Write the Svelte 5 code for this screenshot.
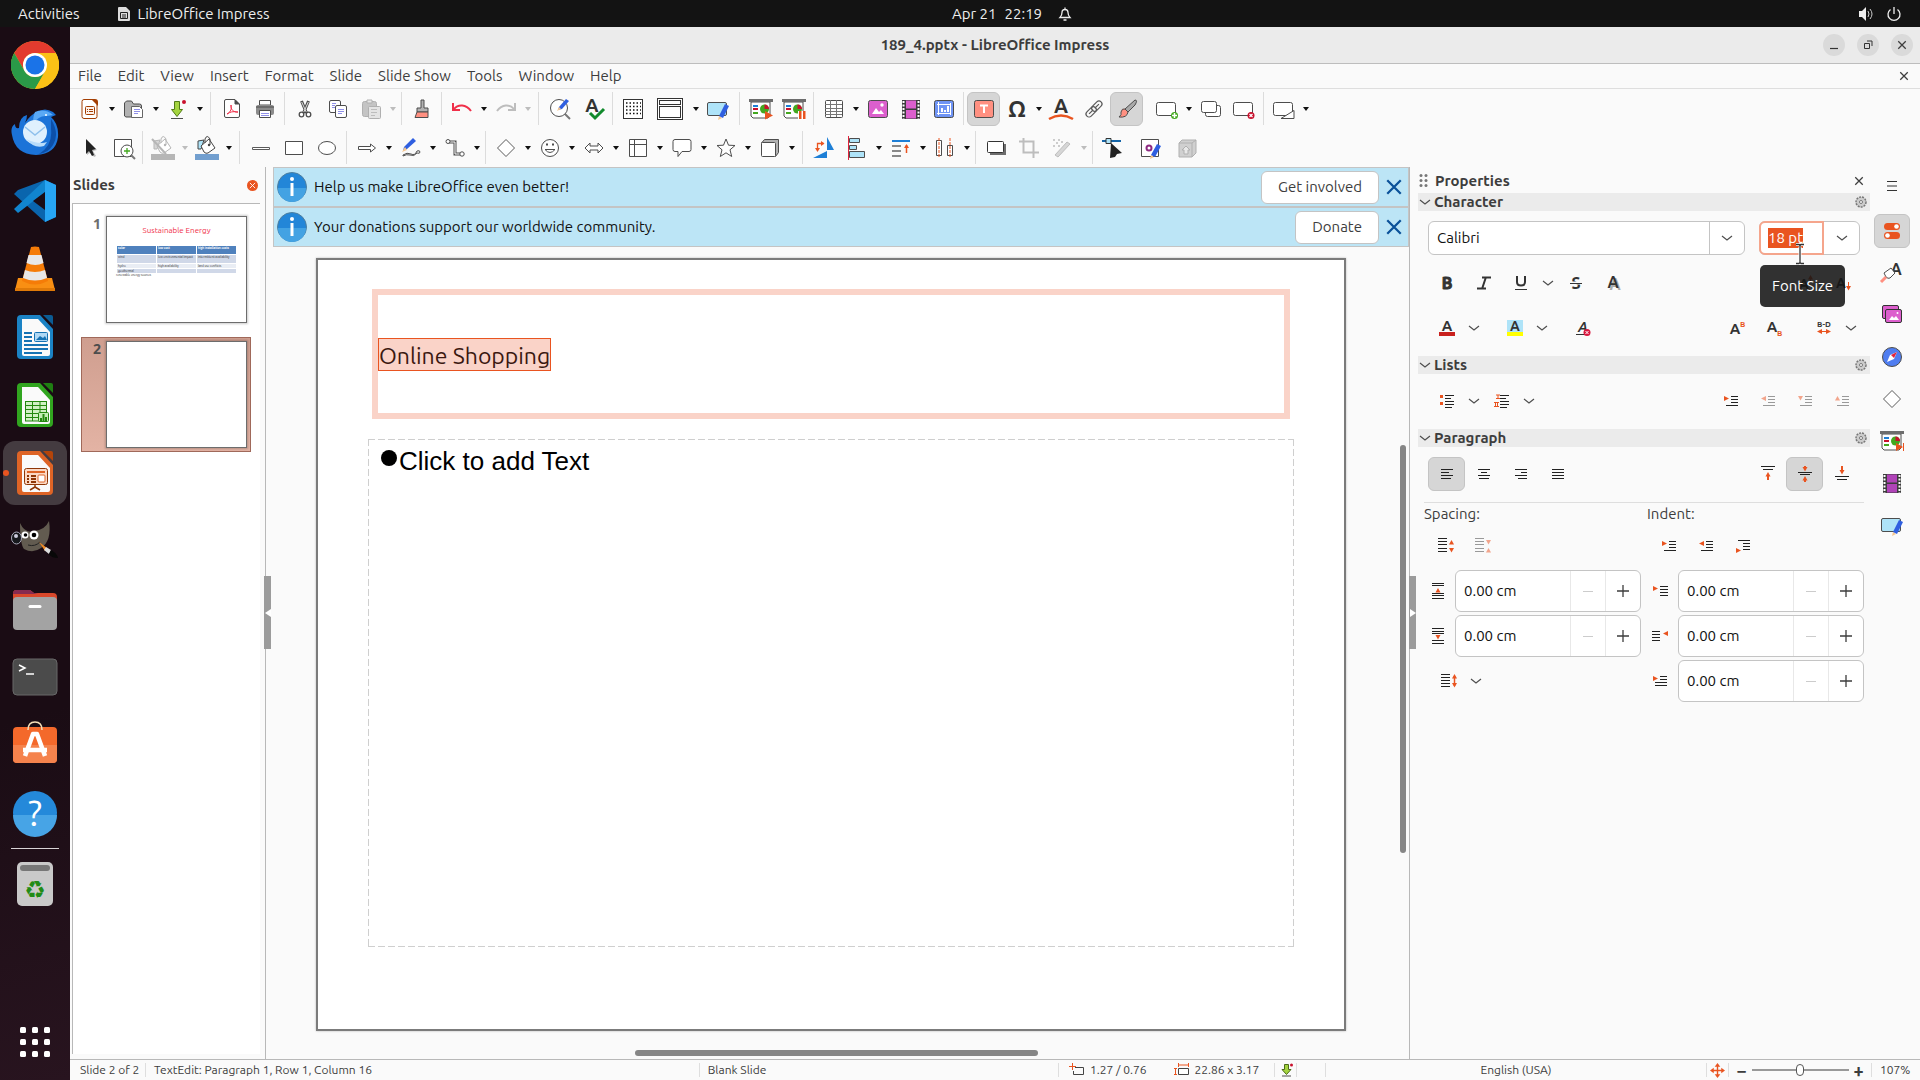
<script lang="ts">
	import { onMount } from 'svelte';

	type Tool = { icon: string; label: string; drop?: boolean; wide?: boolean; on?: boolean; off?: boolean };
	type Item = Tool | '|' | '||' | ' ';

	const menus = ['File', 'Edit', 'View', 'Insert', 'Format', 'Slide', 'Slide Show', 'Tools', 'Window', 'Help'];

	// '|' narrow separator, '||' wide separator, ' ' gap without a line
	const standardBar: Item[] = [
		{ icon: 'impress', label: 'New', drop: true },
		{ icon: 'open', label: 'Open', drop: true },
		{ icon: 'save', label: 'Save', drop: true },
		'||',
		{ icon: 'pdf', label: 'Export as PDF' },
		{ icon: 'print', label: 'Print' },
		'|',
		{ icon: 'cut', label: 'Cut' },
		{ icon: 'copy', label: 'Copy' },
		{ icon: 'paste', label: 'Paste', drop: true, off: true },
		'|',
		{ icon: 'clone', label: 'Clone Formatting' },
		'|',
		{ icon: 'undo', label: 'Undo', drop: true },
		{ icon: 'redo', label: 'Redo', drop: true, off: true },
		'||',
		{ icon: 'find', label: 'Find & Replace' },
		{ icon: 'spell', label: 'Spelling' },
		'|',
		{ icon: 'grid', label: 'Display Grid' },
		{ icon: 'views', label: 'Display Views', drop: true, wide: true },
		{ icon: 'note', label: 'Master Slide' },
		'||',
		{ icon: 'showFirst', label: 'Start from First Slide' },
		{ icon: 'showCurrent', label: 'Start from Current Slide' },
		'|',
		{ icon: 'table', label: 'Table', drop: true },
		{ icon: 'image', label: 'Image' },
		{ icon: 'video', label: 'Media' },
		{ icon: 'chart', label: 'Chart' },
		'|',
		{ icon: 'textbox', label: 'Text Box', on: true },
		{ icon: 'omega', label: 'Special Character', drop: true },
		{ icon: 'fontwork', label: 'Fontwork' },
		{ icon: 'link', label: 'Hyperlink' },
		{ icon: 'brush', label: 'Show Draw Functions', on: true },
		' ',
		{ icon: 'newSlide', label: 'New Slide', drop: true },
		{ icon: 'dupSlide', label: 'Duplicate Slide' },
		{ icon: 'delSlide', label: 'Delete Slide' },
		'|',
		{ icon: 'layout', label: 'Slide Layout', drop: true }
	];

	const drawingBar: Item[] = [
		{ icon: 'pointer', label: 'Select' },
		{ icon: 'zoom', label: 'Zoom & Pan' },
		'|',
		{ icon: 'lineColor', label: 'Line Color', drop: true, off: true },
		{ icon: 'fillColor', label: 'Fill Color', drop: true },
		'||',
		{ icon: 'line', label: 'Line' },
		{ icon: 'rect', label: 'Rectangle' },
		{ icon: 'ellipse', label: 'Ellipse' },
		'|',
		{ icon: 'arrowShape', label: 'Lines and Arrows', drop: true },
		{ icon: 'curve', label: 'Curves and Polygons', drop: true },
		{ icon: 'connector', label: 'Connectors', drop: true },
		'|',
		{ icon: 'diamond', label: 'Basic Shapes', drop: true },
		{ icon: 'smiley', label: 'Symbol Shapes', drop: true },
		{ icon: 'blockArrow', label: 'Block Arrows', drop: true },
		{ icon: 'flowchart', label: 'Flowchart', drop: true },
		{ icon: 'callout', label: 'Callouts', drop: true },
		{ icon: 'star', label: 'Stars and Banners', drop: true },
		{ icon: 'cube', label: '3D Objects', drop: true },
		'||',
		{ icon: 'rotate', label: 'Rotate' },
		{ icon: 'align', label: 'Align Objects', drop: true },
		{ icon: 'arrange', label: 'Arrange', drop: true },
		{ icon: 'distribute', label: 'Distribute', drop: true },
		'|',
		{ icon: 'shadow', label: 'Shadow' },
		{ icon: 'crop', label: 'Crop Image', off: true },
		{ icon: 'filter', label: 'Filter', drop: true, off: true },
		'|',
		{ icon: 'points', label: 'Points' },
		{ icon: 'glue', label: 'Gluepoints', wide: true },
		{ icon: 'extrude', label: 'Toggle Extrusion', off: true }
	];

	const dockApps = [
		{ icon: 'chrome', label: 'Google Chrome' },
		{ icon: 'thunderbird', label: 'Thunderbird Mail' },
		{ icon: 'vscode', label: 'Visual Studio Code' },
		{ icon: 'vlc', label: 'VLC media player' },
		{ icon: 'writer', label: 'LibreOffice Writer' },
		{ icon: 'calc', label: 'LibreOffice Calc' },
		{ icon: 'impressApp', label: 'LibreOffice Impress', active: true },
		{ icon: 'gimp', label: 'GIMP' },
		{ icon: 'files', label: 'Files' },
		{ icon: 'terminal', label: 'Terminal' },
		{ icon: 'software', label: 'Ubuntu Software' },
		{ icon: 'help', label: 'Help' }
	];

	const deckTabs = [
		{ icon: 'menu', label: 'Sidebar Settings' },
		{ icon: 'props', label: 'Properties', on: true },
		{ icon: 'styles', label: 'Styles' },
		{ icon: 'gallery', label: 'Gallery' },
		{ icon: 'navigator', label: 'Navigator' },
		{ icon: 'diamond', label: 'Shapes' },
		{ icon: 'transition', label: 'Slide Transition' },
		{ icon: 'film', label: 'Animation' },
		{ icon: 'note', label: 'Master Slides' }
	];

	const infobars = [
		{ text: 'Help us make LibreOffice even better!', action: 'Get involved' },
		{ text: 'Your donations support our worldwide community.', action: 'Donate' }
	];

	const thumbRows = [
		['wind', 'low environmental impact', 'intermittent availability'],
		['hydro', 'high availability', 'land use conflicts'],
		['geothermal', '', '']
	];

	let fontName = $state('Calibri');
	let fontSize = $state('18 pt');
	let zoom = $state(50);
	let sizeInput: HTMLInputElement;

	onMount(() => {
		sizeInput.focus();
		sizeInput.select();
	});

	const slideBase = (x: number, y: number) =>
		`<rect x="${x}" y="${y}" width="19" height="13" rx="2" fill="#fff" stroke="#4d4d4d"/>`;
	const screen = `<path d="M2 5v14l2 2h15l2-2V5z" fill="#fff" stroke="#4d4d4d"/><path d="M0 2h24v3H0z" fill="#6d6d6d"/><path d="M4 8h5v2H4z" fill="#1e7fd6"/><path d="M4 11h5v2H4z" fill="#c9112d"/><path d="M4 15h5v2H4z" fill="#43a81f"/><circle cx="15.500" cy="12" r="4.500" fill="#43a81f"/><path d="M15.500 12V7.500a4.500 4.500 0 0 1 4.500 4.500z" fill="#c9112d"/>`;
	const pencil = `<path d="M12 23l1-4 3 2z" fill="#f7c78f"/><path d="M13 19l6-11 4 2-6 11z" fill="#2f5fe0"/>`;
	const para = (y: number[], x1: number, x2: number, c = '#222') =>
		y.map((v) => `<path d="M${x1} ${v}.500H${x2}" stroke="${c}" fill="none"/>`).join('');
	const tri = { r: 'M0 0l5 2.500-5 2.500z', l: 'M5 0v5L0 2.500z', d: 'M0 0h5L2.500 4.500z', u: 'M0 4.500h5L2.500 0z' };
	const mark = (k: keyof typeof tri, x: number, y: number, c = '#e95420') =>
		`<path transform="translate(${x} ${y})" d="${tri[k]}" fill="${c}"/>`;
	const letter = (t: string, x: number, y: number, size: number, extra = '') =>
		`<text x="${x}" y="${y}" font-size="${size}" font-weight="700" fill="#333" text-anchor="middle" ${extra}>${t}</text>`;
	const film = (c: string, w = 18) =>
		`<path d="M${12 - w / 2} 3h${w}v19h-${w}z" fill="#3d3d3d"/><path d="M${16 - w / 2} 3.500h${w - 8}v8h-${w - 8}zM${16 - w / 2} 13h${w - 8}v8.500h-${w - 8}z" fill="${c}"/><path d="M${13.5 - w / 2} 4v18M${10.5 + w / 2} 4v18" stroke="#fff" stroke-width="2" stroke-dasharray="2 1.500"/>`;
	const bucket = (c: string, bg: string, bar: string) =>
		`<path d="M3 13V5l6-1-3 9z" fill="${bg}" stroke="${c}"/><path d="M6 10l8-7 6 9-7 5q-2 1-4-1z" fill="#fff" stroke="${c}"/><path d="M10 7V3q2-5 5 0v6" fill="none" stroke="${c}"/><circle cx="14" cy="9" r="1.200" fill="${c}"/><path d="M0 18h24v6H0z" fill="${bar}"/>`;

	const icons: Record<string, string> = {
		impress: `<path d="M6 2.500h9l4 4v13q0 2-2 2H6q-2 0-2-2v-15q0-2 2-2z" fill="#fff" stroke="#a33e03"/><path d="M13 2h4q3 0 3 3v4z" fill="#a33e03"/><rect x="7.500" y="9.500" width="9" height="8" rx="1" fill="#fdf1ea" stroke="#a33e03"/><path d="M9 12.500h1m1 0h4m-6 2h1m1 0h4" stroke="#a33e03"/>`,
		open: `<path d="M2.500 19V6l2-2h5l2 3h6q2 0 2 2v10q0 1-2 1H4z" fill="#b2b2b2" stroke="#4d4d4d"/><path d="M9.500 9.500h8l3 3v8h-11z" fill="#fff" stroke="#666"/><path d="M12 12.500h6m-6 2h6m-6 2h4" stroke="#8f8fe8"/>`,
		save: `<path d="M8.500 4.500h5v8h3l-5.500 7-5.500-7h3z" fill="#a4d43f" stroke="#517b16"/><path d="M5 21.500h12" stroke="#4d4d4d"/><circle cx="18" cy="5" r="2" fill="#c9112d"/>`,
		pdf: `<path d="M4.500 4q0-1.500 1.500-1.500h9l4.500 4.500v12q0 1.500-1.500 1.500H6q-1.500 0-1.500-1.500z" fill="#fff" stroke="#4d4d4d"/><path d="M15 3v4h4z" fill="#4d4d4d" stroke="#4d4d4d"/><path d="M7 17c4-2 5-6 4-9-1 4 3 8 7 7-5-1-8 0-11 2" fill="none" stroke="#f0304a"/>`,
		print: `<path d="M6.500 3.500h11V8h-11z" fill="#fff" stroke="#4d4d4d"/><rect x="3" y="8" width="18" height="10" rx="2" fill="#8c8c8c"/><path d="M3 10h18" stroke="#4d4d4d"/><path d="M6.500 13.500h11v7h-11z" fill="#fff" stroke="#4d4d4d"/><path d="M8 16.500h8m-8 2h8" stroke="#8f8fe8"/>`,
		cut: `<path d="M8.500 4l5 12M15.500 4l-5 12" stroke="#4d4d4d" stroke-width="3"/><path d="M8.700 5l4.500 10M15.300 5l-4.500 10" stroke="#ddd"/><circle cx="8.500" cy="17.500" r="2.300" fill="#fff" stroke="#4d4d4d" stroke-width="1.300"/><circle cx="15.500" cy="17.500" r="2.300" fill="#fff" stroke="#4d4d4d" stroke-width="1.300"/>`,
		copy: `<rect x="3.500" y="3.500" width="11" height="12" rx="1.500" fill="#fff" stroke="#4d4d4d"/><path d="M6 6.500h4m-4 2h3m-3 2h3" stroke="#8f8fe8"/><rect x="9.500" y="8.500" width="11" height="12" rx="1.500" fill="#fff" stroke="#4d4d4d"/><path d="M12 12.500h6m-6 2h6m-6 2h4" stroke="#8f8fe8"/>`,
		paste: `<rect x="3.500" y="4.500" width="14" height="15" rx="2" fill="#c4c4c4" stroke="#b0b0b0"/><path d="M8 3h5v3H8z" fill="#e8e8e8" stroke="#b0b0b0"/><rect x="9.500" y="9.500" width="12" height="12" rx="1" fill="#e4e4e4" stroke="#b0b0b0"/><path d="M12 12.500h6m-6 3h6m-6 3h4" stroke="#bdbdbd"/>`,
		clone: `<path d="M11 3h3v8h4v4H7v-4h4z" fill="#b2b2b2" stroke="#4d4d4d"/><path d="M7 15h11v5.500H5z" fill="#ff9081" stroke="#4d4d4d"/>`,
		undo: `<path d="M4 12c4-5 12-5 17 2" fill="none" stroke="#f0304a" stroke-width="2"/><path d="M3 6v7h7" fill="none" stroke="#f0304a" stroke-width="2"/>`,
		redo: `<path d="M20 12c-4-5-12-5-17 2" fill="none" stroke="#bdbdbd" stroke-width="2"/><path d="M21 6v7h-7" fill="none" stroke="#bdbdbd" stroke-width="2"/>`,
		find: `<circle cx="11" cy="11" r="8.500" fill="#fff" stroke="#4d4d4d"/><path d="M17 17l5 5" stroke="#777" stroke-width="2"/><path d="M10 13l1-3 7-8 3 2-7 8z" fill="#2f5fe0"/><path d="M9 14l2-4 2 2z" fill="#f7c78f"/>`,
		spell: `${letter('A', 11, 15, 19)}<path d="M9 16l5 5 9-9" fill="none" stroke="#118a2c" stroke-width="3"/>`,
		grid: `<rect x="2.500" y="2.500" width="19" height="19" fill="#fff" stroke="#333"/><path d="M5 6h15M5 9.500h15M5 13h15M5 16.500h15" stroke="#111" stroke-width="1.500" stroke-dasharray="1.500 2"/>`,
		views: `<rect x="-0.500" y="1.500" width="25" height="21" fill="#fff" stroke="#333"/><rect x="1.500" y="3.500" width="21" height="4" fill="none" stroke="#333"/><rect x="1.500" y="9.500" width="21" height="11" fill="none" stroke="#333"/>`,
		note: `<rect x="1.500" y="5.500" width="19" height="13" rx="1.500" fill="#aee3f8" stroke="#4d4d4d"/><path d="M12 23l1-4 3 2z" fill="#f7c78f"/><path d="M13 19l6-12 4 2-6 12z" fill="#2f5fe0"/>`,
		showFirst: `${screen}<path d="M16 14l8 4.500-8 4z" fill="#e95420"/>`,
		showCurrent: `${screen}<path d="M16 14h8v9h-8z" fill="#fff"/><path d="M17 14h2.500v8H17zM21 14h2.500v8H21z" fill="#e95420"/>`,
		transition: `${screen}<path d="M16 14l7 4-7 4z" fill="#e95420"/><path d="M23.500 14v8" stroke="#e95420"/>`,
		table: `<rect x="3.500" y="3.500" width="17" height="17" rx="1" fill="#fff" stroke="#4d4d4d"/><path d="M8.500 3v17M14.500 3v17M3 7.500h17M3 11.500h17M3 14.500h17M3 17.500h17" stroke="#777"/>`,
		image: `<rect x="2.500" y="3.500" width="19" height="17" rx="2" fill="#dc5fcd" stroke="#4d4d4d"/><path d="M6 17l4-6 3 4 2-2 3 4z" fill="#fff"/><circle cx="16" cy="8" r="1.700" fill="#fff"/>`,
		video: film('#dc5fcd'),
		film: film('#b043b8'),
		chart: `<rect x="2.500" y="3.500" width="19" height="17" rx="2" fill="#6f94f5" stroke="#4d4d4d"/><path d="M6.500 5v13M5 16.500h14M18.500 6v12M5 7.500h14" stroke="#fff"/><path d="M9 11h2v4H9zM12 13h2v2h-2zM15 9h2v6h-2z" fill="#fff"/>`,
		textbox: `<rect x="2.500" y="3.500" width="19" height="17" rx="2" fill="#ff9081" stroke="#4d4d4d"/><path d="M8 8.500h8M12 8v8" stroke="#fff" stroke-width="2"/>`,
		omega: `${letter('Ω', 12, 20, 23)}`,
		fontwork: `${letter('A', 12, 16, 20)}<path d="M0 22q12-7 24 0" fill="none" stroke="#e95420" stroke-width="2.500"/>`,
		link: `<g transform="rotate(-45 12 12)" fill="none" stroke="#5a5a5a" stroke-width="1.200"><rect x="2" y="9" width="12" height="6" rx="3"/><rect x="10" y="9" width="12" height="6" rx="3"/><path d="M5 12h6M13 12h6"/></g>`,
		brush: `<path d="M20 3q3 0 0 5l-7 7-3-3z" fill="#a9a9a9" stroke="#4d4d4d"/><path d="M10 12l3 3q-1 6-9 5 3-2 2-5 1-4 4-3z" fill="#ff9081" stroke="#4d4d4d"/>`,
		newSlide: `${slideBase(1.5, 5.5)}<circle cx="19.500" cy="18.500" r="3.500" fill="#43a81f"/><path d="M17 18.500h5M19.500 16v5" stroke="#fff" stroke-width="1.500"/>`,
		dupSlide: `<rect x="6.500" y="8.500" width="15" height="11" rx="2" fill="#fff" stroke="#4d4d4d"/><rect x="2.500" y="4.500" width="15" height="11" rx="2" fill="#fff" stroke="#4d4d4d"/>`,
		delSlide: `${slideBase(1.5, 5.5)}<circle cx="19" cy="18.500" r="3.500" fill="#c9112d"/><path d="M17.500 17l3 3m0-3l-3 3" stroke="#fff" stroke-width="1.200"/>`,
		layout: `${slideBase(1.5, 5.5)}<path d="M9 21.500h13v-8z" fill="#fff" stroke="#4d4d4d"/>`,
		pointer: `<path d="M9 4l10 10-4 1 3 5-2 1-3-5-4 3z" fill="#bbb"/><path d="M8 3l10 10-4 1 2 5-2 1-3-5-3 3z" fill="#222"/>`,
		zoom: `<path d="M3.500 3.500h17v17h-17z" fill="#fff" stroke="#4d4d4d"/><circle cx="16" cy="15" r="6" fill="#fff" stroke="#4d4d4d"/><path d="M20 19l4 4" stroke="#777" stroke-width="2"/><path d="M13 15h6M16 12v6" stroke="#43a81f" stroke-width="1.300"/>`,
		lineColor: `${bucket('#b6b6b6', '#d6d6d6', '#b6b6b6')}<path d="M1 3l14 15" stroke="#b6b6b6" stroke-width="2"/>`,
		fillColor: bucket('#444', '#aee3f8', '#729fcf'),
		line: `<path d="M3.500 11.500h17v2h-17z" fill="#fff" stroke="#5a5a5a"/>`,
		rect: `<path d="M3.500 5.500h17v13h-17z" fill="#fff" stroke="#4d4d4d"/>`,
		ellipse: `<ellipse cx="12" cy="12" rx="8.500" ry="6.500" fill="#fff" stroke="#4d4d4d"/>`,
		arrowShape: `<path d="M3.500 10.500h12v-2.500l5 4-5 4v-2.500h-12z" fill="#fff" stroke="#4d4d4d"/>`,
		curve: `<path d="M4 15l1-4 9-9 3 3-9 8z" fill="#2f5fe0"/><path d="M3 16l3-5 2 3z" fill="#f7c78f"/><path d="M4 19q4-3 8-1t6-3q3-1 3 1t-3 1q-3 4-7 2-4-1-7 1z" fill="#fff" stroke="#4d4d4d"/>`,
		connector: `<path d="M6 6h6v12h7" fill="none" stroke="#4d4d4d" stroke-width="3"/><path d="M6 6h6v12h7" fill="none" stroke="#fff"/><circle cx="5" cy="5.500" r="2" fill="#fff" stroke="#4d4d4d"/><circle cx="19" cy="18" r="2.200" fill="#fff" stroke="#4d4d4d"/>`,
		diamond: `<path d="M12 3.500l8.500 8.500-8.500 8.500L3.500 12z" fill="#fff" stroke="#5a5a5a"/>`,
		smiley: `<circle cx="12" cy="12" r="8.500" fill="#fff" stroke="#4d4d4d"/><path d="M8 8.500h2M14 8.500h2" stroke="#4d4d4d" stroke-width="2"/><path d="M7 13.500q5 6 10 0z" fill="#fff" stroke="#4d4d4d"/>`,
		blockArrow: `<path d="M3 12l5-5v3h8V7l5 5-5 5v-3H8v3z" fill="#fff" stroke="#4d4d4d"/>`,
		flowchart: `<path d="M3.500 3.500h17v17h-17zM3.500 8.500h17M8.500 3.500v17" fill="#fff" stroke="#4d4d4d"/>`,
		callout: `<path d="M5 3.500h14q2 0 2 2v8q0 2-2 2h-7l-4 5v-5H5q-2 0-2-2v-8q0-2 2-2z" fill="#fff" stroke="#4d4d4d"/>`,
		star: `<path d="M12 3l2.500 6.200 6.500.3-5 4.300 1.700 6.700-5.700-3.700-5.700 3.700L8 13.800 3 9.500l6.500-.3z" fill="#fff" stroke="#4d4d4d"/>`,
		cube: `<path d="M3.500 7l3-3.500h14v13l-3 4z" fill="#b2b2b2" stroke="#4d4d4d"/><rect x="3.500" y="6.500" width="14" height="14" rx="1" fill="#fff" stroke="#4d4d4d"/>`,
		rotate: `<path d="M15 1v13h7zM15 15v7H1z" fill="#1e7fd6"/><path d="M5.500 14V7.500h6" fill="none" stroke="#e95420" stroke-width="1.300"/><path d="M3 12h5l-2.500 4zM9 5l3.500 2.500L9 10z" fill="#e95420"/>`,
		align: `<path d="M3.500 0v24" stroke="#e0243c"/><path d="M4.500 2.500h10v4h-10zM4.500 9.500h7v4h-7zM4.500 15.500h15v6h-15z" fill="#aee3f8" stroke="#4d4d4d"/>`,
		arrange: `<path d="M3 5h18" stroke="#1e7fd6" stroke-width="2"/><path d="M3 10h9M3 15h9M3 20h9" stroke="#888" stroke-width="2"/><path d="M17.500 9v8" stroke="#e95420" stroke-width="1.500"/><path d="M15 12l2.500-4 2.500 4z" fill="#e95420"/>`,
		distribute: `<path d="M3.500 4.500h5v15h-5zM14.500 9.500h5v10h-5z" fill="#fff" stroke="#4d4d4d"/><path d="M6 2v20M17 2v20" stroke="#e95420" stroke-dasharray="3 1"/>`,
		shadow: `<path d="M6 8h16v11H6z" fill="#6d6d6d"/><rect x="3.500" y="5.500" width="16" height="11" rx="1" fill="#fff" stroke="#333"/>`,
		crop: `<path d="M6.500 2v14.500H22M2 5.500h14.500V22" fill="none" stroke="#bdbdbd" stroke-width="2"/>`,
		filter: `<path d="M5 19L17 6l3 2L8 21z" fill="#d6d6d6" stroke="#bdbdbd"/><path d="M3 4h2m3 0h2M6 7h2m3-1h2M3 10h2m3 0h2" stroke="#bdbdbd" stroke-width="1.500"/>`,
		points: `<path d="M1 5h19" stroke="#1565a8" stroke-width="2"/><path d="M5 2.500h5v5H5z" fill="#aee3f8" stroke="#333"/><path d="M10 7l11 10-5 1-2 3-5 1z" fill="#222"/>`,
		glue: `<path d="M3.500 3.500h17v17h-17z" fill="#fff" stroke="#4d4d4d"/><circle cx="11" cy="12" r="2.500" fill="#fff" stroke="#8e2a82" stroke-width="2"/>${pencil}`,
		extrude: `<path d="M4 7l3-3h14v13l-4 4H4z" fill="#d0d0d0" stroke="#b0b0b0"/><path d="M4 7h13v14M17 7l4-3" fill="none" stroke="#b0b0b0"/><path d="M11 10l4 4h-2v4H9v-4H7z" fill="#e8e8e8" stroke="#b0b0b0"/>`,

		bold: letter('B', 12, 18, 16, 'stroke="#333"'),
		italic: `<path d="M10 6.500h9M5 17.500h9M14 6l-4 12" stroke="#333" stroke-width="2"/>`,
		underline: `<path d="M8 5v6q0 3.500 4 3.500t4-3.500V5" fill="none" stroke="#333" stroke-width="2"/><path d="M6 18.500h12" stroke="#333"/>`,
		strike: `${letter('S', 12, 18, 16)}<path d="M6 12h12" stroke="#fafafa" stroke-width="3"/><path d="M6 12.500h12" stroke="#333"/>`,
		letterShadow: `<text x="14" y="19" font-size="16" font-weight="700" fill="#aaa" text-anchor="middle">A</text>${letter('A', 12, 17, 16)}`,
		grow: `${letter('A', 11, 18, 14)}<path d="M17.500 11V6" stroke="#e95420"/>${mark('u', 15, 4)}`,
		shrink: `${letter('A', 11, 17, 14)}<path d="M18.500 11v5" stroke="#e95420"/>${mark('d', 16, 15)}`,
		fontColor: `${letter('A', 12, 15, 15)}<path d="M4 16h16v4H4z" fill="#c9211e"/>`,
		highlight: `<path d="M4 4h16v12H4z" fill="#aee3f8"/>${letter('A', 12, 15, 14)}<path d="M4 16h16v4H4z" fill="#ff0"/>`,
		clear: `${letter('A', 12, 16, 14, 'font-style="italic"')}<path d="M5 18.500h9" stroke="#333"/><circle cx="16" cy="16.500" r="3.500" fill="#d8183f"/><path d="M14.500 15l3 3m0-3l-3 3" stroke="#fff"/>`,
		sup: `${letter('A', 10, 18, 15)}<text x="15" y="11" font-size="8" font-weight="700" fill="#e95420">B</text>`,
		sub: `${letter('A', 10, 16, 15)}<text x="15" y="20" font-size="8" font-weight="700" fill="#e95420">B</text>`,
		spacing: `<text x="12" y="11" font-size="8" font-weight="700" fill="#333" text-anchor="middle">B-D</text><path d="M7 15.500h10" stroke="#e95420"/>${mark('l', 5, 13)}${mark('r', 14, 13)}`,
		bullets: `<path d="M5 6h3v3H5zM5 13h3v3H5z" fill="#e95420"/>${para([6, 12, 15], 10, 19)}${para([9], 10, 16)}${para([18], 10, 17)}`,
		numbers: `<path d="M6 6h4M6 9.500h4M8 6v4M4 13.500h5M4 17.500h5M5.500 13v5M7.500 13v5" stroke="#e95420"/>${para([6, 12, 15], 10, 19)}${para([9], 10, 16)}${para([18], 10, 17)}`,
		indentRight: `${mark('r', 5, 7)}${para([7, 10, 13], 12, 19)}${para([16], 7, 19)}`,
		indentLeft: `${mark('l', 5, 7)}${para([7, 10, 13], 12, 19)}${para([16], 7, 19)}`,
		outdentOff: `${mark('l', 5, 7, '#f2a58c')}${para([7, 10, 13], 12, 19, '#999')}${para([16], 7, 19, '#999')}`,
		downOff: `${mark('d', 5, 7, '#f2a58c')}${para([7, 10, 13], 12, 19, '#999')}${para([16], 7, 19, '#999')}`,
		upOff: `${mark('u', 5, 7, '#f2a58c')}${para([7, 10, 13], 12, 19, '#999')}${para([16], 7, 19, '#999')}`,
		hanging: `${mark('r', 5, 14)}${para([6], 7, 19)}${para([9, 12, 15], 12, 19)}`,
		alignLeft: `${para([7, 13], 6, 18)}${para([10], 6, 14)}${para([16], 6, 16)}`,
		alignCenter: `${para([7, 13], 6, 18)}${para([10], 9, 15)}${para([16], 7, 17)}`,
		alignRight: `${para([7, 13], 6, 18)}${para([10], 12, 18)}${para([16], 9, 18)}`,
		justify: para([7, 10, 13, 16], 6, 18),
		vTop: `${para([4], 5, 19)}${para([7], 7, 17)}<path d="M12 12v6" stroke="#e95420" stroke-width="2"/>${mark('u', 9.5, 10)}`,
		vMiddle: `${para([10], 5, 19)}${para([12], 7, 17)}<path d="M12 4v3M12 17v3" stroke="#e95420" stroke-width="2"/>${mark('d', 9.5, 5)}${mark('u', 9.5, 14)}`,
		vBottom: `${para([14], 5, 19)}${para([17], 7, 17)}<path d="M12 4v5" stroke="#e95420" stroke-width="2"/>${mark('d', 9.5, 8)}`,
		spaceMore: `${para([4, 7, 10, 14, 17], 4, 13)}${mark('u', 15, 6)}${mark('d', 15, 14)}`,
		spaceLess: `${para([4, 7, 10, 14, 17], 4, 13, '#999')}${mark('d', 15, 6, '#f2a58c')}${mark('u', 15, 14, '#f2a58c')}`,
		above: `${para([4, 6, 14, 16, 19], 6, 18)}${mark('u', 9.5, 9)}`,
		below: `${para([4, 7, 9, 16, 19], 6, 18)}${mark('d', 9.5, 11)}`,
		before: `${mark('r', 4, 7)}${para([7, 10, 13, 16], 11, 19)}`,
		after: `${mark('l', 14, 7)}${para([7, 10, 13, 16], 3, 11)}`,
		firstLine: `${mark('r', 4, 7)}${para([7, 10], 11, 18)}${para([13, 16], 6, 18)}`,
		lineSpacing: `${para([5, 8, 11, 14, 17], 4, 13)}<path d="M17.500 7v10" stroke="#e95420" stroke-width="1.500"/>${mark('u', 15, 5)}${mark('d', 15, 14)}`,

		menu: `<path d="M7 7.500h10M7 12h10M7 16.500h10" stroke="#333" stroke-width="1.200"/>`,
		props: `<rect x="4" y="4" width="16" height="7" rx="3.500" fill="#e95420"/><circle cx="16.500" cy="7.500" r="2.300" fill="#fff"/><rect x="4" y="13" width="16" height="7" rx="3.500" fill="#e95420"/><circle cx="7.500" cy="16.500" r="2.300" fill="#fff"/>`,
		styles: `${letter('A', 16, 14, 16)}<path d="M4 12l7-5 4 5-5 5q-2 1-4-1z" fill="#fff" stroke="#4d4d4d"/><path d="M6 16l-5 5" stroke="#ff9081" stroke-width="3"/>`,
		gallery: `<rect x="2.500" y="2.500" width="16" height="13" rx="1.500" fill="#dc5fcd" stroke="#333"/><rect x="5.500" y="6.500" width="16" height="13" rx="1.500" fill="#dc5fcd" stroke="#333"/><path d="M9 17l3-4 2 2 2-2 3 4z" fill="#fff"/><circle cx="17.500" cy="10" r="1" fill="#fff"/>`,
		navigator: `<circle cx="12" cy="12" r="9.500" fill="#4f7df0" stroke="#4d4d4d"/><path d="M17 7l-3 7-7 3 3-7z" fill="#fff"/><path d="M17 7l-3 6-3-3z" fill="#e0243c"/>`
	};

	const docIcon = (edge: string, top: string, art: string) =>
		`<path d="M11 2h19l13 14v26q0 4-4 4H11q-4 0-4-4V6q0-4 4-4z" transform="translate(-1 0)" fill="${edge}"/><path d="M10 5h16l12 13v22q0 2-2 2H12q-2 0-2-2V5z" transform="translate(1 1)" fill="#fafafa"/><path d="M32 2h8q2 0 2 2v8z" fill="${top}"/>${art}`;

	const apps: Record<string, string> = {
		chrome: `<circle cx="24" cy="24" r="24" fill="#fbc116"/><path d="M3.200 12A24 24 0 0 1 44.800 12H24A12 12 0 0 0 13.600 30z" fill="#e33b2e"/><path d="M3.200 12A24 24 0 0 0 24 48L34.400 30A12 12 0 0 1 13.600 30z" fill="#2a9a48"/><path d="M24 48A24 24 0 0 0 44.800 12H24l10.400 18z" fill="#fbc116"/><circle cx="24" cy="24" r="12" fill="#fff"/><circle cx="24" cy="24" r="9.500" fill="#1a73e8"/>`,
		thunderbird: `<path d="M1 26Q-1 18 4 15q0 5 4 4Q8 8 16 6q0 4-2 8 5-8 12-11 8-5 16 0l3 3-5 2q8 7 7 20-2 17-22 18Q4 45 1 26z" fill="#1b73d8"/><path d="M24 3q10-4 18 3l-6 1q-8-1-14 8 0-8 2-12z" fill="#5aa9f5"/><path d="M40 10q9 15 2 26-5 8-14 9 14-9 12-25z" fill="#0c4fa8"/><circle cx="24" cy="23" r="12" fill="#dff0fd"/><path d="M14 18l10 8 10-8" fill="none" stroke="#8fc0ec" stroke-width="1.500"/><path d="M15 30q8 10 18 7l3-4q-8 3-21-3z" fill="#b8dcfa"/><circle cx="35" cy="6" r="1" fill="#fff"/>`,
		vscode: `<path d="M34 3l11 5v32l-11 5L3 17l4-4z" fill="#0a65ad"/><path d="M34 3v12L7 36l-4-4z" fill="#1185cf"/><path d="M34 15v18L22 24z" fill="#1a0c14"/><path d="M34 3l11 5v32l-11 5z" fill="#27a5f3"/>`,
		vlc: `<path d="M7 33h34l3 12H4z" fill="#f98f13"/><path d="M4 43h40v3H4z" fill="#e07a08"/><path d="M20 2q4-1 8 0l9 34q-13 7-26 0z" fill="#f57c08"/><path d="M17.500 10h13l2 8q-8 4-17 0zM14 25q10 4 20 0l2 8q-12 5-24 0z" fill="#e8e8e8"/>`,
		writer: docIcon('#1b83c5', '#0b5c94', `<path d="M13 20h8M13 24h8M13 28h8M13 32h24M13 36h24M13 40h18" stroke="#1673b4" stroke-width="2"/><rect x="23.500" y="19.500" width="13" height="9" rx="1" fill="#b0d9f5" stroke="#1673b4"/><path d="M25 27l4-4 3 2 2-2 2 4z" fill="#1673b4"/>`),
		calc: docIcon('#31a51f', '#1f7f12', `<path d="M14 20h22v20H14z" fill="#d0f0c4"/><path d="M14.500 20v20M21.500 20v20M29 20v20M35.500 20v14M14 20.500h22M14 24.500h22M14 28.500h22M14 32.500h22M14 36.500h16M14 40h16" stroke="#23880f"/><rect x="27.500" y="31.500" width="10" height="9" rx="1" fill="#c2ecb4" stroke="#23880f"/><path d="M29 37h2v3h-2zM31.500 33h2v7h-2zM34 36h2v4h-2z" fill="#23880f"/>`),
		impressApp: docIcon('#de6426', '#b3440a', `<rect x="13.500" y="19.500" width="23" height="16" rx="2" fill="#fbd9c5" stroke="#8f3606"/><path d="M16 23h18" stroke="#de6426" stroke-width="2"/><path d="M16 27h2m2 0h5M16 30h2m2 0h5M16 33h2m2 0h5" stroke="#8f3606" stroke-width="2"/><rect x="27" y="26" width="7" height="7" rx="1" fill="#fff" stroke="#de6426"/><path d="M24 36v2m0 0l-5 3m5-3l5 3" stroke="#8f3606" stroke-width="1.500"/>`),
		gimp: `<g transform="translate(0 2)"><path d="M9 4q5 11 14 8 11-1 15-10 3 20-8 27-8 6-17 1-4-5-4-26z" fill="#625b50"/><ellipse cx="5.500" cy="19" rx="5" ry="6" fill="#17191d" stroke="#aab"/><ellipse cx="5" cy="17" rx="2" ry="2" fill="#ccd"/><circle cx="14" cy="16" r="3.500" fill="#fff"/><circle cx="23" cy="16" r="4.500" fill="#fff"/><circle cx="14.500" cy="16" r="1.800"/><circle cx="23" cy="16" r="2.300"/><path d="M17 26q7 2 12-3" fill="none" stroke="#222"/><path d="M28 23l8 6-2 3z" fill="#f08a24"/><path d="M35 28l5 3-2 4-5-4z" fill="#ddd"/><path d="M40 31q6 3 7 8-7 0-9-4z" fill="#080808"/></g>`,
		files: `<path d="M2 9q0-4 3-4h14l4 3h19q4 0 4 4v8H2z" fill="#d9482b"/><path d="M2 9q0-4 3-4h14l4 3 4 1H2z" fill="#862b50"/><rect x="2" y="12" width="44" height="33" rx="4" fill="#a3a3a3"/><path d="M19 21.500h10" stroke="#fff" stroke-width="3" stroke-linecap="round"/>`,
		terminal: `<rect x="2" y="6" width="44" height="36" rx="4" fill="#4b4b4b" stroke="#686868"/><path d="M8 12l6 3-6 3M15 21h8" fill="none" stroke="#fff" stroke-width="1.500"/>`,
		software: `<rect x="2" y="6" width="44" height="36" rx="4" fill="#f4692b"/><path d="M2 24h44v14q0 4-4 4H6q-4 0-4-4z" fill="#f5834d"/><path d="M17 9Q17 1 24 1t7 8" fill="none" stroke="#f5dfb8" stroke-width="1.500"/><path d="M14 35l8-22h4l8 22M12 29h24" fill="none" stroke="#fff" stroke-width="4.500" stroke-linejoin="round"/>`,
		help: `<circle cx="24" cy="24" r="22" fill="#2489da"/><path d="M2 26a22 22 0 0 0 44 0z" fill="#47a4e6"/><text x="24" y="37" font-size="36" fill="#fff" text-anchor="middle">?</text>`,
		trash: `<rect x="6" y="2" width="36" height="44" rx="5" fill="#c9c9c9"/><rect x="9" y="5" width="30" height="6" rx="3" fill="#777"/><text x="24" y="38" font-size="24" fill="#218b16" text-anchor="middle" font-family="DejaVu Sans">♻</text>`
	};
</script>

{#snippet glyph(name: string)}
	<svg class="glyph" viewBox="0 0 24 24" aria-hidden="true">{@html icons[name]}</svg>
{/snippet}

{#snippet chevron()}
	<svg class="chevron" viewBox="0 0 12 12" aria-hidden="true"><path d="M1 4l5 4 5-4" fill="none" stroke="#4d4d4d" stroke-width="1.200" /></svg>
{/snippet}

{#snippet cross(size: string)}
	<svg class={size} viewBox="0 0 16 16" aria-hidden="true"><path d="M2 2l12 12M14 2L2 14" fill="none" stroke="currentColor" stroke-width="2" /></svg>
{/snippet}

{#snippet toolbar(items: Item[], label: string)}
	<div class="toolbar" role="toolbar" aria-label={label}>
		{#each items as item}
			{#if item === '|'}
				<span class="sep"></span>
			{:else if item === '||'}
				<span class="sep roomy"></span>
			{:else if item === ' '}
				<span class="sep blank"></span>
			{:else}
				<button class="tool" class:on={item.on} class:wide={item.wide} disabled={item.off} aria-label={item.label}>
					{@render glyph(item.icon)}
				</button>
				{#if item.drop}
					<button class="drop" disabled={item.off} aria-label="{item.label} options"></button>
				{/if}
			{/if}
		{/each}
	</div>
{/snippet}

{#snippet mini(icon: string, label: string, on = false)}
	<button class="mini" class:on aria-label={label}>{@render glyph(icon)}</button>
{/snippet}

{#snippet more(label: string)}
	<button class="more" aria-label={label}>{@render chevron()}</button>
{/snippet}

{#snippet sectionTitle(title: string)}
	<header class="section-title">
		<button class="expander" aria-label="Collapse {title}">{@render chevron()}</button>
		<h2>{title}</h2>
		<button class="gear" aria-label="{title} options">
			<svg viewBox="0 0 12 12" aria-hidden="true">
				<circle cx="6" cy="6" r="5" fill="#ccc" stroke="#777" stroke-width="1.500" stroke-dasharray="2 1" />
				<circle cx="6" cy="6" r="1.500" fill="#fff" stroke="#777" />
			</svg>
		</button>
	</header>
{/snippet}

{#snippet spin(id: string, icon: string, label: string)}
	<div class="spin-row">
		<label for={id} aria-label={label}>{@render glyph(icon)}</label>
		<div class="spin">
			<input {id} type="text" value="0.00 cm" />
			<button class="dim" aria-label="Decrease {label}">
				<svg viewBox="0 0 12 12" aria-hidden="true"><path d="M1 6.500h10" stroke="currentColor" /></svg>
			</button>
			<button aria-label="Increase {label}">
				<svg viewBox="0 0 12 12" aria-hidden="true"><path d="M0 6h12M6 0v12" stroke="currentColor" stroke-width="1.300" /></svg>
			</button>
		</div>
	</div>
{/snippet}

<div class="desktop">
	<!-- Top bar -->
	<header class="topbar">
		<div class="top-left">
			<button>Activities</button>
			<button class="app-menu">
				<svg viewBox="0 0 12 14" aria-hidden="true">
					<path d="M0 1q0-1 1-1h7l4 4v9q0 1-1 1H1q-1 0-1-1z" fill="#ddd" />
					<path d="M2.500 5.500h7v6h-7zM4 8h4M4 10h4" fill="none" stroke="#222" />
				</svg>
				LibreOffice Impress
			</button>
		</div>
		<button class="clock">
			<span>Apr 21</span><span>22:19</span>
			<svg viewBox="0 0 14 16" aria-hidden="true"><path d="M2 11.500q2-2 2-5 0-3 3-3t3 3q0 3 2 5zM7 1.500v2M5.500 14h3" fill="none" stroke="#eee" stroke-width="1.300" /></svg>
		</button>
		<div class="top-right">
			<svg viewBox="0 0 16 16" role="img" aria-label="Volume"><path d="M1 5h3l4-4v14l-4-4H1z" fill="#eee" /><path d="M10 5q2 3 0 6M12 3q4 5 0 10" fill="none" stroke="#ccc" /></svg>
			<svg viewBox="0 0 16 16" role="img" aria-label="Power"><path d="M4.500 3.500a6 6 0 1 0 7 0M8 1v7" fill="none" stroke="#eee" stroke-width="1.300" /></svg>
		</div>
	</header>

	<!-- Dock -->
	<nav class="dock" aria-label="Dock">
		{#each dockApps as app}
			<button class="dock-item" class:active={app.active} aria-label={app.label}>
				<svg viewBox="0 0 48 48" aria-hidden="true">{@html apps[app.icon]}</svg>
			</button>
		{/each}
		<hr />
		<button class="dock-item" aria-label="Trash"><svg viewBox="0 0 48 48" aria-hidden="true">{@html apps.trash}</svg></button>
		<button class="dock-item all-apps" aria-label="Show Applications">
			<svg viewBox="0 0 48 48" aria-hidden="true">
				{#each [9, 21, 33] as y}
					{#each [9, 21, 33] as x}
						<rect {x} {y} width="6" height="6" rx="1.500" fill="#fff" />
					{/each}
				{/each}
			</svg>
		</button>
	</nav>

	<!-- Window -->
	<div class="window">
		<header class="titlebar">
			<h1>189_4.pptx - LibreOffice Impress</h1>
			<div class="win-buttons">
				<button aria-label="Minimize"><svg viewBox="0 0 12 12" aria-hidden="true"><path d="M2 9.500h8" stroke="#333" stroke-width="1.200" /></svg></button>
				<button aria-label="Restore"><svg viewBox="0 0 12 12" aria-hidden="true"><path d="M2.500 4.500h5v5h-5zM5 2h5v5" fill="none" stroke="#333" /></svg></button>
				<button aria-label="Close">{@render cross('x-small')}</button>
			</div>
		</header>

		<nav class="menubar" aria-label="Menu">
			{#each menus as item}
				<button>{item}</button>
			{/each}
			<button class="close-doc" aria-label="Close Document">{@render cross('x-small')}</button>
		</nav>

		<div class="toolbars">
			{@render toolbar(standardBar, 'Standard')}
			{@render toolbar(drawingBar, 'Drawing')}
		</div>

		<div class="body">
			<!-- Slide panel -->
			<aside class="slides">
				<header>
					<h2>Slides</h2>
					<button class="close-panel" aria-label="Close Pane">{@render cross('x-tiny')}</button>
				</header>
				<ol class="slide-list">
					<li>
						<span class="num">1</span>
						<div class="thumb">
							<p class="thumb-title">Sustainable Energy</p>
							<table>
								<thead><tr><th>solar</th><th>low cost</th><th>high installation costs</th></tr></thead>
								<tbody>
									{#each thumbRows as row}
										<tr>{#each row as cell}<td>{cell}</td>{/each}</tr>
									{/each}
								</tbody>
							</table>
							<p class="thumb-note">renewable energy sources</p>
						</div>
					</li>
					<li class="current">
						<span class="num">2</span>
						<div class="thumb"></div>
					</li>
				</ol>
			</aside>

			<!-- Editing area -->
			<main class="workspace">
				<button class="splitter" aria-label="Hide slide panel"><svg viewBox="0 0 6 8" aria-hidden="true"><path d="M6 0v8L0 4z" fill="#fff" /></svg></button>
				<div class="infobars">
					{#each infobars as bar}
						<div class="infobar">
							<svg class="info" viewBox="0 0 30 30" aria-hidden="true">
								<circle cx="15" cy="15" r="14.500" fill="#2386d8" stroke="#4f7f9f" />
								<path d="M1 16a14 14 0 0 0 28 0z" fill="#43a2e3" />
								<circle cx="15" cy="7" r="2" fill="#fff" /><path d="M13.500 11h3v13h-3z" fill="#fff" />
							</svg>
							<p>{bar.text}</p>
							<button class="action">{bar.action}</button>
							<button class="dismiss" aria-label="Close Infobar">{@render cross('x-large')}</button>
						</div>
					{/each}
				</div>
				<div class="canvas">
					<article class="slide">
						<div class="title-frame"><p>Online Shopping</p></div>
						<div class="text-frame">
							<span class="bullet"></span>
							<p>Click to add Text</p>
						</div>
					</article>
				</div>
				<div class="vscroll"><span></span></div>
				<div class="hscroll"><span></span></div>
			</main>

			<!-- Sidebar -->
			<aside class="sidebar">
				<button class="splitter" aria-label="Hide sidebar"><svg viewBox="0 0 6 8" aria-hidden="true"><path d="M0 0v8l6-4z" fill="#fff" /></svg></button>
				<div class="deck">
					<header class="deck-title">
						<svg class="grip" viewBox="0 0 9 14" aria-hidden="true">
							{#each [1.5, 6.5, 11.5] as cy}
								<circle cx="2" {cy} r="1.500" fill="#777" /><circle cx="7" {cy} r="1.500" fill="#777" />
							{/each}
						</svg>
						<h2>Properties</h2>
						<button class="close-deck" aria-label="Close Sidebar Deck">{@render cross('x-small')}</button>
					</header>

					{@render sectionTitle('Character')}
					<div class="section">
						<div class="fonts">
							<div class="combo">
								<input type="text" aria-label="Font Name" bind:value={fontName} />
								<button aria-label="Show fonts">{@render chevron()}</button>
							</div>
							<div class="combo size">
								<input type="text" aria-label="Font Size" bind:value={fontSize} bind:this={sizeInput} />
								<button aria-label="Show sizes">{@render chevron()}</button>
								<svg class="ibeam" viewBox="0 0 10 22" aria-hidden="true">
									<path d="M1 1.500h3l1 1 1-1h3M5 2v18M1 20.500h3l1-1 1 1h3" fill="none" stroke="#fff" stroke-width="3" />
									<path d="M1 1.500h3l1 1 1-1h3M5 2v18M1 20.500h3l1-1 1 1h3" fill="none" stroke="#333" stroke-width="1.300" />
								</svg>
								<div class="tooltip" role="tooltip">Font Size</div>
							</div>
						</div>
						<div class="row">
							{@render mini('bold', 'Bold')}{@render mini('italic', 'Italic')}{@render mini('underline', 'Underline')}
							{@render more('Underline styles')}
							{@render mini('strike', 'Strikethrough')}{@render mini('letterShadow', 'Shadow')}
							<span class="fill"></span>
							{@render mini('grow', 'Increase Font Size')}{@render mini('shrink', 'Decrease Font Size')}
						</div>
						<div class="row">
							{@render mini('fontColor', 'Font Color')}{@render more('Font colors')}
							<span class="gap"></span>
							{@render mini('highlight', 'Highlighting')}{@render more('Highlighting colors')}
							<span class="gap"></span>
							{@render mini('clear', 'Clear Formatting')}
							<span class="fill"></span>
							{@render mini('sup', 'Superscript')}{@render mini('sub', 'Subscript')}
							<span class="gap"></span>
							{@render mini('spacing', 'Character Spacing')}{@render more('Spacing options')}
						</div>
					</div>

					{@render sectionTitle('Lists')}
					<div class="section">
						<div class="row">
							{@render mini('bullets', 'Unordered List')}{@render more('Bullet styles')}
							{@render mini('numbers', 'Ordered List')}{@render more('Number styles')}
							<span class="fill"></span>
							{@render mini('indentRight', 'Demote')}{@render mini('outdentOff', 'Promote')}
							{@render mini('downOff', 'Move Down')}{@render mini('upOff', 'Move Up')}
						</div>
					</div>

					{@render sectionTitle('Paragraph')}
					<div class="section">
						<div class="row">
							{@render mini('alignLeft', 'Align Left', true)}{@render mini('alignCenter', 'Center')}
							{@render mini('alignRight', 'Align Right')}{@render mini('justify', 'Justified')}
							<span class="fill"></span>
							{@render mini('vTop', 'Align Top')}{@render mini('vMiddle', 'Center Vertically', true)}{@render mini('vBottom', 'Align Bottom')}
						</div>
					</div>
					<div class="paragraph">
						<div class="column">
							<h3>Spacing:</h3>
							<div class="icons">{@render mini('spaceMore', 'Increase Paragraph Spacing')}{@render mini('spaceLess', 'Decrease Paragraph Spacing')}</div>
							{@render spin('above', 'above', 'Above Paragraph Spacing')}
							{@render spin('below', 'below', 'Below Paragraph Spacing')}
							<div class="icons spacing">{@render mini('lineSpacing', 'Line Spacing')}{@render more('Line spacing options')}</div>
						</div>
						<div class="column">
							<h3>Indent:</h3>
							<div class="icons">{@render mini('indentRight', 'Increase Indent')}{@render mini('indentLeft', 'Decrease Indent')}{@render mini('hanging', 'Hanging Indent')}</div>
							{@render spin('before', 'before', 'Before Text Indent')}
							{@render spin('after', 'after', 'After Text Indent')}
							{@render spin('first', 'firstLine', 'First Line Indent')}
						</div>
					</div>
				</div>

				<nav class="tabs" aria-label="Sidebar decks">
					{#each deckTabs as tab}
						<button class="mini" class:on={tab.on} aria-label={tab.label}>{@render glyph(tab.icon)}</button>
					{/each}
				</nav>
			</aside>
		</div>

		<!-- Status bar -->
		<footer class="status">
			<span class="cell page">Slide 2 of 2</span>
			<span class="cell edit">TextEdit: Paragraph 1, Row 1, Column 16</span>
			<span class="cell layout-name">Blank Slide</span>
			<span class="cell pos">
				<svg viewBox="0 0 16 14" aria-hidden="true"><path d="M6 4.500h8.500v7h-10V8" fill="none" stroke="#444" /><path d="M3.500 0v7M0 3.500h7" stroke="#e95420" /></svg>
				1.27 / 0.76
				<svg class="second" viewBox="0 0 16 14" aria-hidden="true"><path d="M4.500 5.500h10v6h-10z" fill="#fff" stroke="#444" /><path d="M4.500 0v4M14.500 0v4M4 2h11M0 5.500h3M0 11.500h3M1.500 5v7" stroke="#e95420" /></svg>
				22.86 x 3.17
			</span>
			<span class="cell saved">
				<svg viewBox="0 0 14 14" aria-hidden="true"><path d="M4.500 1.500h4v5H11l-4.500 5L2 6.500h2.500z" fill="#a4d43f" stroke="#4c6b1a" /><path d="M2 13h9" stroke="#4d4d4d" /><circle cx="11.500" cy="2" r="1.500" fill="#c9112d" /></svg>
			</span>
			<span class="cell blank-cell"></span>
			<span class="cell lang">English (USA)</span>
			<span class="cell fit">
				<svg viewBox="0 0 16 16" aria-hidden="true"><path d="M8 3v10M3 8h10" stroke="#e95420" stroke-width="1.500" /><path d="M5 4l3-4 3 4zM5 12l3 4 3-4zM4 5L0 8l4 3zM12 5l4 3-4 3z" fill="#e95420" /></svg>
			</span>
			<span class="cell zoom">
				<button aria-label="Zoom out">−</button>
				<input type="range" min="0" max="100" bind:value={zoom} aria-label="Zoom" />
				<button aria-label="Zoom in">+</button>
			</span>
			<span class="cell percent">107%</span>
		</footer>
	</div>
</div>

<style>
	:global(body) {
		margin: 0;
	}

	.desktop {
		display: grid;
		grid-template: 27px minmax(0, 1fr) / 70px minmax(0, 1fr);
		height: 100vh;
		overflow: hidden;
		background: #fafafa;
		color: #3d3d3d;
		font: 15px/20px Ubuntu, "Noto Sans", sans-serif;
	}

	.desktop :is(h1, h2, h3, p, ol) {
		margin: 0;
		padding: 0;
	}

	h1, h2 {
		font-size: 15px;
		font-weight: 700;
	}

	button {
		display: flex;
		align-items: center;
		justify-content: center;
		padding: 0;
		border: 0;
		background: none;
		color: inherit;
		font: inherit;
	}

	input {
		min-width: 0;
		box-sizing: border-box;
		border: 0;
		outline: 0;
		background: none;
		color: #111;
		font: inherit;
	}

	svg {
		display: block;
		flex-shrink: 0;
	}

	.glyph { width: 24px; height: 24px; overflow: visible; }
	.chevron { width: 12px; height: 12px; }
	.x-tiny { width: 7px; height: 7px; }
	.x-small { width: 10px; height: 10px; }
	.x-large { width: 18px; height: 18px; }

	/* ── Top bar ── */
	.topbar {
		grid-column: 1 / -1;
		display: grid;
		grid-template-columns: 1fr auto 1fr;
		align-items: center;
		background: #131313;
		color: #eee;
	}

	.top-left {
		display: flex;
		gap: 38px;
		padding-left: 18px;
	}

	.app-menu { gap: 8px; }
	.app-menu svg { width: 12px; height: 14px; }
	.clock { gap: 8px; padding-left: 104px; }
	.clock svg { width: 14px; height: 16px; margin-left: 8px; }

	.top-right {
		display: flex;
		justify-content: flex-end;
		gap: 12px;
		padding-right: 18px;
	}

	.top-right svg { width: 16px; height: 16px; }

	/* ── Dock ── */
	.dock {
		display: flex;
		flex-direction: column;
		align-items: center;
		padding: 4px 0;
		background: linear-gradient(165deg, #1a0c14 65%, #28141f);
	}

	.dock hr {
		width: 48px;
		height: 1px;
		margin: 1px 0;
		border: 0;
		background: #d8d4d6;
	}

	.dock-item {
		position: relative;
		flex: 0 0 64px;
		width: 64px;
		margin: 2px 0;
		border-radius: 12px;
	}

	.dock-item svg { width: 48px; height: 48px; }
	.dock-item.active { background: #443b40; }

	.dock-item.active::before {
		content: '';
		position: absolute;
		left: 0;
		width: 6px;
		height: 6px;
		border-radius: 50%;
		background: #e95420;
	}

	.all-apps { margin-top: auto; }

	/* ── Window chrome ── */
	.window {
		display: flex;
		flex-direction: column;
		min-width: 0;
	}

	.titlebar {
		position: relative;
		display: flex;
		align-items: center;
		justify-content: center;
		flex: 0 0 36px;
		border-bottom: 1px solid #bdbdbd;
		background: #ebebeb;
	}

	.win-buttons {
		position: absolute;
		right: 7px;
		display: flex;
		gap: 12px;
	}

	.win-buttons button {
		width: 22px;
		height: 22px;
		border-radius: 50%;
		background: #dadada;
	}

	.win-buttons svg { width: 12px; height: 12px; }
	.win-buttons .x-small { width: 10px; height: 10px; }

	.menubar {
		display: flex;
		align-items: center;
		gap: 16px;
		flex: 0 0 24px;
		padding: 0 11px 0 8px;
		border-bottom: 1px solid #dedede;
	}

	.close-doc { margin-left: auto; }

	.toolbars {
		display: flex;
		flex-direction: column;
		flex: 0 0 78px;
	}

	.toolbar {
		display: flex;
		align-items: center;
		flex: 1;
		padding-left: 3px;
	}

	.tool {
		box-sizing: border-box;
		flex: 0 0 33px;
		height: 34px;
		border: 1px solid transparent;
		border-radius: 6px;
	}

	.tool.wide { flex-basis: 41px; }

	.tool.on,
	.mini.on {
		border-color: #c4c4c4;
		background: #d6d6d6;
	}

	.drop {
		flex: 0 0 11px;
		height: 34px;
	}

	.drop::before {
		content: '';
		border: 3px solid transparent;
		border-top: 4px solid #111;
		border-bottom: 0;
	}

	.drop:disabled::before { border-top-color: #bdbdbd; }

	.sep {
		flex: 0 0 7px;
		height: 33px;
		background: linear-gradient(#dcdcdc, #dcdcdc) center / 1px 100% no-repeat;
	}

	.sep.roomy { flex-basis: 10px; }
	.sep.blank { background: none; }

	.body {
		display: flex;
		flex: 1;
		min-height: 0;
	}

	/* ── Slide panel ── */
	.slides {
		display: flex;
		flex-direction: column;
		box-sizing: border-box;
		flex: 0 0 196px;
		padding: 0 5px 5px 2px;
		border-right: 1px solid #b8b8b8;
	}

	.slides header {
		display: flex;
		align-items: center;
		justify-content: space-between;
		flex: 0 0 36px;
		padding: 0 2px 0 1px;
	}

	.close-panel {
		width: 11px;
		height: 11px;
		border-radius: 50%;
		background: #e95420;
		color: #fff;
	}

	.slide-list {
		flex: 1;
		border: solid #b8b8b8;
		border-width: 1px 0 0 1px;
		background: #fff;
		list-style: none;
	}

	.slide-list li {
		display: flex;
		justify-content: space-between;
		box-sizing: border-box;
		height: 115px;
		margin: 8px 9px 10px 8px;
		padding: 3px;
		border: 1px solid transparent;
	}

	.slide-list .current {
		border-color: #a0695a;
		background: linear-gradient(#cf9e8f, #e3b3a4);
	}

	.num {
		width: 16px;
		color: #6d6d6d;
		font: 700 14px/16px "Noto Sans", sans-serif;
		text-align: right;
	}

	.current .num { color: #4d4d4d; }

	.thumb {
		box-sizing: border-box;
		width: 141px;
		height: 107px;
		padding: 9px 9px 0;
		border: 1px solid #6d6d6d;
		background: #fff;
		box-shadow: 0 0 2px 1px #0003;
	}

	.thumb-title {
		color: #f0304a;
		font-size: 8px;
		line-height: 10px;
		text-align: center;
		white-space: nowrap;
	}

	.thumb table {
		width: 100%;
		margin-top: 9px;
		border-spacing: 1px 1px;
		table-layout: fixed;
		color: #222;
		font-size: 3px;
		line-height: 4px;
	}

	.thumb :is(td, th) {
		height: 4px;
		padding: 0 1px;
		background: #e9edf4;
		text-align: left;
		vertical-align: top;
		white-space: nowrap;
	}

	.thumb th {
		height: 8px;
		background: #4f81bd;
		color: #fff;
	}

	.thumb tr:nth-child(odd) td { background: #d0d8e8; }
	.thumb tbody tr:first-child td { height: 8px; }

	.thumb-note {
		color: #222;
		font-size: 3px;
		line-height: 3px;
	}

	/* ── Editing area ── */
	.workspace {
		position: relative;
		display: grid;
		grid-template: auto minmax(0, 1fr) 12px / minmax(0, 1fr) 12px;
		flex: 1;
		min-width: 0;
	}

	.splitter {
		position: absolute;
		z-index: 1;
		top: 50%;
		left: -2px;
		width: 7px;
		height: 73px;
		margin-top: -37px;
		background: #9b9b9b;
	}

	.splitter svg { width: 6px; height: 8px; }

	.infobars {
		grid-column: 1 / -1;
		margin-left: 7px;
	}

	.infobar {
		display: flex;
		align-items: center;
		box-sizing: border-box;
		height: 40px;
		padding: 0 5px 0 3px;
		border: 1px solid #c4c4c4;
		background: #bce5f6;
		color: #111;
	}

	.info { width: 30px; height: 30px; }

	.infobar p {
		flex: 1;
		padding-left: 7px;
	}

	.action {
		height: 33px;
		padding: 0 16px;
		border: 1px solid #c4c4c4;
		border-radius: 6px;
		background: #fff;
		color: #3d3d3d;
		box-sizing: border-box;
	}

	.dismiss {
		margin-left: 6px;
		color: #0b5299;
	}

	.canvas {
		display: flex;
		padding: 11px 51px 16px 50px;
	}

	.slide {
		display: flex;
		flex-direction: column;
		gap: 20px;
		flex: 1;
		padding: 29px 50px 82px;
		border: 2px solid #7b7b7b;
		background: #fff;
		box-shadow: 0 0 2px #0004;
	}

	.title-frame {
		display: flex;
		align-items: center;
		box-sizing: border-box;
		height: 130px;
		margin: 0 4px;
		border: 6px solid #fad3c8;
	}

	.title-frame p {
		padding-top: 2px;
		border: 1px solid #e95420;
		background: #fad3c8;
		color: #3a1810;
		font-size: 23px;
		line-height: 29px;
	}

	/* Long dashes on all four edges */
	.text-frame {
		--dash: #cfcfcf 0 7px, transparent 7px 10px;
		display: flex;
		align-items: flex-start;
		gap: 2px;
		flex: 1;
		padding: 7px 13px;
		background:
			repeating-linear-gradient(90deg, var(--dash)) top / 100% 1px no-repeat,
			repeating-linear-gradient(90deg, var(--dash)) bottom / 100% 1px no-repeat,
			repeating-linear-gradient(var(--dash)) left / 1px 100% no-repeat,
			repeating-linear-gradient(var(--dash)) right / 1px 100% no-repeat;
		color: #000;
		font: 26px/30px "Liberation Sans", sans-serif;
	}

	.bullet {
		width: 16px;
		height: 16px;
		margin-top: 4px;
		border-radius: 50%;
		background: #000;
	}

	.vscroll {
		display: grid;
		grid-template-rows: 198fr 408fr 194fr;
		padding: 0 3px;
	}

	.vscroll span,
	.hscroll span {
		border-radius: 3px;
		background: #868686;
	}

	.vscroll span { grid-row: 2; }

	.hscroll {
		display: grid;
		grid-column: 1 / -1;
		grid-template-columns: 369fr 403fr 371fr;
		padding: 3px 0;
	}

	.hscroll span { grid-column: 2; }

	/* ── Sidebar ── */
	.sidebar {
		position: relative;
		display: flex;
		box-sizing: border-box;
		flex: 0 0 511px;
		border-left: 1px solid #b8b8b8;
	}

	.sidebar .splitter { left: -1px; }

	.deck {
		flex: 1;
		min-width: 0;
		padding-left: 8px;
	}

	.deck-title {
		display: flex;
		align-items: center;
		gap: 7px;
		height: 24px;
		padding: 2px 6px 0 1px;
	}

	.grip { width: 9px; height: 14px; }
	.close-deck { margin-left: auto; }

	.section-title {
		display: flex;
		align-items: center;
		height: 18px;
		padding: 0 3px 0 1px;
		background: #ebebeb;
	}

	.section-title h2 {
		flex: 1;
		padding-left: 3px;
	}

	.gear svg { width: 12px; height: 12px; }

	.section {
		display: flex;
		flex-direction: column;
		gap: 11px;
		padding: 10px 10px 11px;
	}

	.fonts {
		display: flex;
		gap: 14px;
	}

	.combo {
		display: flex;
		box-sizing: border-box;
		flex: 1;
		min-width: 0;
		height: 34px;
		border: 1px solid #c4c4c4;
		border-radius: 6px;
		background: #fff;
	}

	.combo input {
		flex: 1;
		width: 0;
		padding: 0 8px;
	}

	.combo button {
		flex: 0 0 35px;
		border-left: 1px solid #c4c4c4;
	}

	.combo.size {
		position: relative;
		flex: 0 0 101px;
	}

	.size input {
		margin: -1px 0 -1px -1px;
		padding: 0 7px;
		border: 2px solid #f5a58c;
		border-radius: 6px 0 0 6px;
	}

	.size input::selection {
		background: #e95420;
		color: #fff;
	}

	.size button { border-left: 0; }

	.ibeam {
		position: absolute;
		z-index: 2;
		top: 21px;
		left: 35px;
		width: 10px;
		height: 22px;
	}

	.tooltip {
		position: absolute;
		z-index: 1;
		top: 43px;
		left: 0;
		padding: 11px 12px;
		border-radius: 5px;
		background: rgba(20, 20, 20, 0.88);
		color: #fff;
		white-space: nowrap;
	}

	.row {
		display: flex;
		height: 34px;
	}

	.mini {
		box-sizing: border-box;
		flex: 0 0 37px;
		height: 34px;
		border: 1px solid transparent;
		border-radius: 6px;
	}

	.more { flex: 0 0 18px; }
	.fill { flex: 1; }
	.gap { flex: 0 0 13px; }

	.paragraph {
		display: grid;
		grid-template-columns: 1fr 1fr;
		gap: 6px;
		margin: 0 6px;
		padding-top: 1px;
		border-top: 1px solid #dedede;
	}

	.column {
		display: flex;
		flex-direction: column;
		gap: 3px;
		min-width: 0;
	}

	h3 {
		font-size: 15px;
		font-weight: 400;
	}

	.icons {
		display: flex;
		height: 34px;
		padding: 2px 0 4px 3px;
	}

	.icons.spacing { padding: 4px 0 4px 6px; }

	.spin-row {
		display: flex;
		align-items: center;
		height: 42px;
	}

	.spin-row label { flex: 0 0 31px; }
	.spin-row .glyph { margin-left: 2px; }

	.spin {
		display: flex;
		box-sizing: border-box;
		flex: 1;
		height: 42px;
		border: 1px solid #c4c4c4;
		border-radius: 6px;
		background: #fff;
	}

	.spin input {
		flex: 1;
		width: 0;
		padding: 0 8px;
	}

	.spin button {
		flex: 0 0 35px;
		border-left: 1px solid #e8e8e8;
	}

	.spin button svg { width: 12px; height: 12px; }
	.spin .dim { color: #ccc; }

	.tabs {
		display: flex;
		flex-direction: column;
		gap: 8px;
		flex: 0 0 46px;
		padding: 2px 0 0 4px;
	}

	.tabs .mini {
		flex: 0 0 34px;
		width: 36px;
	}

	.tabs .mini:first-child { margin-bottom: 3px; }

	/* ── Status bar ── */
	.status {
		display: flex;
		align-items: center;
		flex: 0 0 20px;
		border-top: 1px solid #b8b8b8;
		font-size: 12px;
	}

	.cell {
		display: flex;
		align-items: center;
		box-sizing: border-box;
		height: 14px;
		padding-left: 8px;
		border-left: 1px solid #dedede;
		white-space: nowrap;
	}

	.page { flex: 0 0 75px; border: 0; padding-left: 10px; }
	.edit { flex: 552 1 0; }
	.layout-name { flex: 355 1 0; }
	.pos { flex: 0 0 216px; gap: 5px; padding-left: 10px; }
	.pos svg { width: 16px; height: 14px; }
	.pos .second { margin-left: 22px; }
	.saved { flex: 0 0 22px; padding-left: 5px; }
	.saved svg { width: 14px; height: 14px; }
	.blank-cell { flex: 0 0 29px; }
	.lang { flex: 385 1 0; justify-content: center; padding: 0; }
	.fit { flex: 0 0 22px; padding: 0; justify-content: center; }
	.fit svg { width: 15px; height: 15px; }
	.zoom { flex: 0 0 143px; justify-content: center; gap: 4px; padding: 0; }

	.zoom button {
		width: 12px;
		font-size: 18px;
		font-weight: 700;
		line-height: 14px;
	}

	.zoom input {
		appearance: none;
		width: 97px;
		height: 12px;
		margin: 0;
		background: linear-gradient(#999, #999) center / 100% 2px no-repeat;
	}

	.zoom input::-webkit-slider-thumb {
		appearance: none;
		box-sizing: border-box;
		width: 8px;
		height: 12px;
		border: 1px solid #555;
		border-radius: 5px;
		background: #fff;
	}

	.percent { flex: 0 0 49px; }
</style>
